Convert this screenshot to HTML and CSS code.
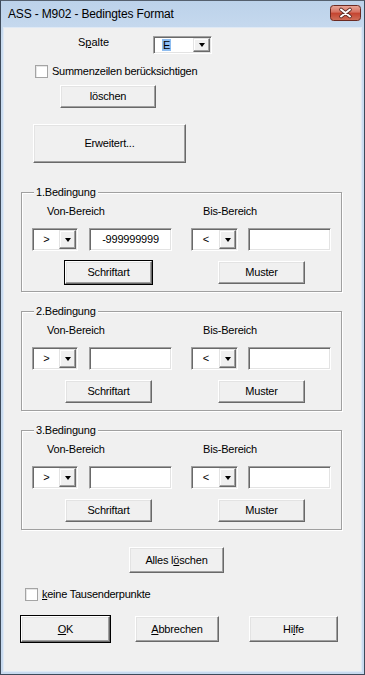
FILE: index.html
```html
<!DOCTYPE html>
<html lang="de">
<head>
    <meta charset="UTF-8">
    <title>ASS - M902 - Bedingtes Format</title>
    <link rel="stylesheet" href="styles.css">
</head>
<body>
    <div class="window">
        <div class="titlebar">
            <span class="title">ASS - M902 - Bedingtes Format</span>
            <span class="close">
                <svg width="31" height="16" viewBox="0 0 31 16">
                    <defs>
                        <linearGradient id="red" x1="0" y1="0" x2="0" y2="1">
                            <stop offset="0" stop-color="#e9a99b"/>
                            <stop offset="0.45" stop-color="#d5705f"/>
                            <stop offset="0.5" stop-color="#c4432f"/>
                            <stop offset="1" stop-color="#d0705a"/>
                        </linearGradient>
                    </defs>
                    <rect x="0.5" y="0.5" width="30" height="15" rx="3" fill="url(#red)" stroke="#6b2a22"/>
                    <path d="M11 4.5 L20 11.5 M20 4.5 L11 11.5" stroke="#5a2a24" stroke-width="3.6" stroke-linecap="round"/>
                    <path d="M11 4.5 L20 11.5 M20 4.5 L11 11.5" stroke="#fff" stroke-width="2" stroke-linecap="round"/>
                </svg>
            </span>
        </div>

        <div class="client">
            <div class="row-spalte">
                <span class="lbl-spalte">S<u>p</u>alte</span>
                <div class="combo combo-spalte">
                    <span class="combo-text"><span class="sel">E</span></span>
                    <span class="drop"></span>
                </div>
            </div>

            <label class="check check-summen">
                <span class="box"></span>
                <span>Summenzeilen berücksichtigen</span>
            </label>

            <button class="btn btn-loeschen">löschen</button>
            <button class="btn btn-erweitert">Erweitert...</button>

            <div class="group group-1">
                <span class="legend">1.Bedingung</span>
                <div class="labels">
                    <span class="lbl-von">Von-Bereich</span>
                    <span class="lbl-bis">Bis-Bereich</span>
                </div>
                <div class="fields">
                    <div class="combo combo-op"><span class="combo-text">&gt;</span><span class="drop"></span></div>
                    <div class="textbox">-999999999</div>
                    <div class="combo combo-op combo-op2"><span class="combo-text">&lt;</span><span class="drop"></span></div>
                    <div class="textbox textbox2"></div>
                </div>
                <div class="actions">
                    <button class="btn btn-default btn-schrift">Schriftart</button>
                    <button class="btn btn-muster">Muster</button>
                </div>
            </div>

            <div class="group group-2">
                <span class="legend">2.Bedingung</span>
                <div class="labels">
                    <span class="lbl-von">Von-Bereich</span>
                    <span class="lbl-bis">Bis-Bereich</span>
                </div>
                <div class="fields">
                    <div class="combo combo-op"><span class="combo-text">&gt;</span><span class="drop"></span></div>
                    <div class="textbox"></div>
                    <div class="combo combo-op combo-op2"><span class="combo-text">&lt;</span><span class="drop"></span></div>
                    <div class="textbox textbox2"></div>
                </div>
                <div class="actions">
                    <button class="btn btn-schrift">Schriftart</button>
                    <button class="btn btn-muster">Muster</button>
                </div>
            </div>

            <div class="group group-3">
                <span class="legend">3.Bedingung</span>
                <div class="labels">
                    <span class="lbl-von">Von-Bereich</span>
                    <span class="lbl-bis">Bis-Bereich</span>
                </div>
                <div class="fields">
                    <div class="combo combo-op"><span class="combo-text">&gt;</span><span class="drop"></span></div>
                    <div class="textbox"></div>
                    <div class="combo combo-op combo-op2"><span class="combo-text">&lt;</span><span class="drop"></span></div>
                    <div class="textbox textbox2"></div>
                </div>
                <div class="actions">
                    <button class="btn btn-schrift">Schriftart</button>
                    <button class="btn btn-muster">Muster</button>
                </div>
            </div>

            <button class="btn btn-alles">Alles l<u>ö</u>schen</button>

            <label class="check check-tausend">
                <span class="box"></span>
                <span><u>k</u>eine Tausenderpunkte</span>
            </label>

            <div class="dialog-buttons">
                <button class="btn btn-default btn-ok"><u>O</u>K</button>
                <button class="btn btn-abbrechen"><u>A</u>bbrechen</button>
                <button class="btn btn-hilfe">Hi<u>l</u>fe</button>
            </div>
        </div>
    </div>
</body>
</html>
```

FILE: styles.css
```css
body {
    margin: 0;
    font-family: "Liberation Sans", Arial, sans-serif;
    font-size: 11px;
    line-height: 13px;
    color: #000;
}

u {
    text-decoration-thickness: 1px;
    text-underline-offset: 1px;
}

/* Window frame */
.window {
    width: 365px;
    height: 675px;
    box-sizing: border-box;
    border: 1px solid #3d4a5a;
    border-top-color: #55606e;
    background: linear-gradient(#bcd2ea, #cadcf0 40px, #c8daef);
    padding: 0 3px 3px;
    display: flex;
    flex-direction: column;
}

.titlebar {
    height: 27px;
    flex: none;
    display: flex;
    justify-content: space-between;
    align-items: flex-start;
}

.title {
    font-size: 12px;
    letter-spacing: -0.15px;
    padding: 7px 0 0 4px;
    color: #000;
}

.close {
    margin-top: 4px;
    height: 16px;
}

.close svg {
    display: block;
}

.client {
    flex: 1;
    background: #f0f0f0;
    box-shadow: 0 0 0 1px #dfe9f5;
    display: flex;
    flex-direction: column;
    align-items: flex-start;
}

/* Common controls */
.btn {
    font: inherit;
    color: #000;
    background: #f0f0f0;
    box-sizing: border-box;
    border: 1px solid;
    border-color: #fff #696969 #696969 #fff;
    box-shadow: inset -1px -1px #a0a0a0, inset 1px 1px #e3e3e3;
    padding: 0;
    letter-spacing: -0.2px;
}

.btn-default {
    outline: 1px solid #000;
    outline-offset: 0;
}

.combo {
    box-sizing: border-box;
    background: #fff;
    border: 1px solid;
    border-color: #a0a0a0 #fff #fff #a0a0a0;
    box-shadow: inset 1px 1px #696969, inset -1px -1px #e3e3e3;
    display: flex;
    padding: 1px;
}

.combo-text {
    flex: 1;
    display: flex;
    align-items: center;
    justify-content: center;
}

.drop {
    width: 17px;
    flex: none;
    box-sizing: border-box;
    background: #f0f0f0;
    border: 1px solid;
    border-color: #e3e3e3 #696969 #696969 #e3e3e3;
    box-shadow: inset -1px -1px #a0a0a0, inset 1px 1px #fff;
    display: flex;
    align-items: center;
    justify-content: center;
}

.drop::after {
    content: "";
    border-left: 3.5px solid transparent;
    border-right: 3.5px solid transparent;
    border-top: 4px solid #000;
}

.textbox {
    box-sizing: border-box;
    width: 83px;
    height: 23px;
    background: #fff;
    border: 1px solid;
    border-color: #a0a0a0 #fff #fff #a0a0a0;
    box-shadow: inset 1px 1px #696969, inset -1px -1px #e3e3e3;
    display: flex;
    align-items: center;
    justify-content: center;
    letter-spacing: -0.2px;
}

.check {
    display: flex;
    align-items: center;
    gap: 4px;
    letter-spacing: -0.25px;
}

.check .box {
    width: 13px;
    height: 13px;
    box-sizing: border-box;
    background: #fff;
    border: 1px solid #a4a4a4;
    box-shadow: inset 1px 1px #e6e6e6;
}

/* Top area */
.row-spalte {
    margin-top: 8px;
    padding-left: 74px;
    display: flex;
    align-items: flex-start;
}

.lbl-spalte {
    width: 75px;
}

.combo-spalte {
    width: 59px;
    height: 18px;
}

.combo-spalte .combo-text {
    justify-content: flex-start;
    padding-left: 7px;
}

.sel {
    background: #8fbdf0;
    padding: 0 1px;
    line-height: 12px;
}

.check-summen {
    margin: 11px 0 0 31px;
}

.btn-loeschen {
    margin: 7px 0 0 56px;
    width: 96px;
    height: 23px;
}

.btn-erweitert {
    margin: 16px 0 0 29px;
    width: 153px;
    height: 39px;
}

/* Condition groups */
.group {
    position: relative;
    box-sizing: border-box;
    width: 321px;
    margin-left: 17px;
    border: 1px solid #a0a0a0;
    box-shadow: inset 1px 1px #fff, 1px 1px #fff;
    padding: 12px 0 7px 10px;
}

.group-1 {
    margin-top: 29px;
}

.group-2 {
    margin-top: 19px;
}

.group-3 {
    margin-top: 19px;
}

.legend {
    position: absolute;
    top: -7px;
    left: 12px;
    padding: 0 2px;
    background: #f0f0f0;
    letter-spacing: -0.2px;
}

.labels {
    display: flex;
    padding-left: 15px;
    letter-spacing: -0.2px;
}

.lbl-von {
    width: 156px;
}

.fields {
    display: flex;
    margin-top: 10px;
}

.combo-op {
    width: 46px;
    height: 23px;
}

.combo-op2 {
    width: 47px;
}

.fields .textbox {
    margin-left: 11px;
}

.fields .combo-op2 {
    margin-left: 19px;
}

.fields .textbox2 {
    margin-left: 10px;
}

.actions {
    display: flex;
    margin-top: 10px;
    padding-left: 33px;
    gap: 66px;
}

.btn-schrift,
.btn-muster {
    width: 87px;
    height: 23px;
}

/* Bottom area */
.btn-alles {
    margin: 17px 0 0 125px;
    width: 95px;
    height: 26px;
}

.check-tausend {
    margin: 15px 0 0 21px;
}

.dialog-buttons {
    display: flex;
    margin: 15px 0 0 17px;
}

.dialog-buttons .btn {
    height: 26px;
}

.btn-ok {
    width: 89px;
}

.btn-abbrechen {
    width: 84px;
    margin-left: 25px;
}

.btn-hilfe {
    width: 89px;
    margin-left: 30px;
}
```
